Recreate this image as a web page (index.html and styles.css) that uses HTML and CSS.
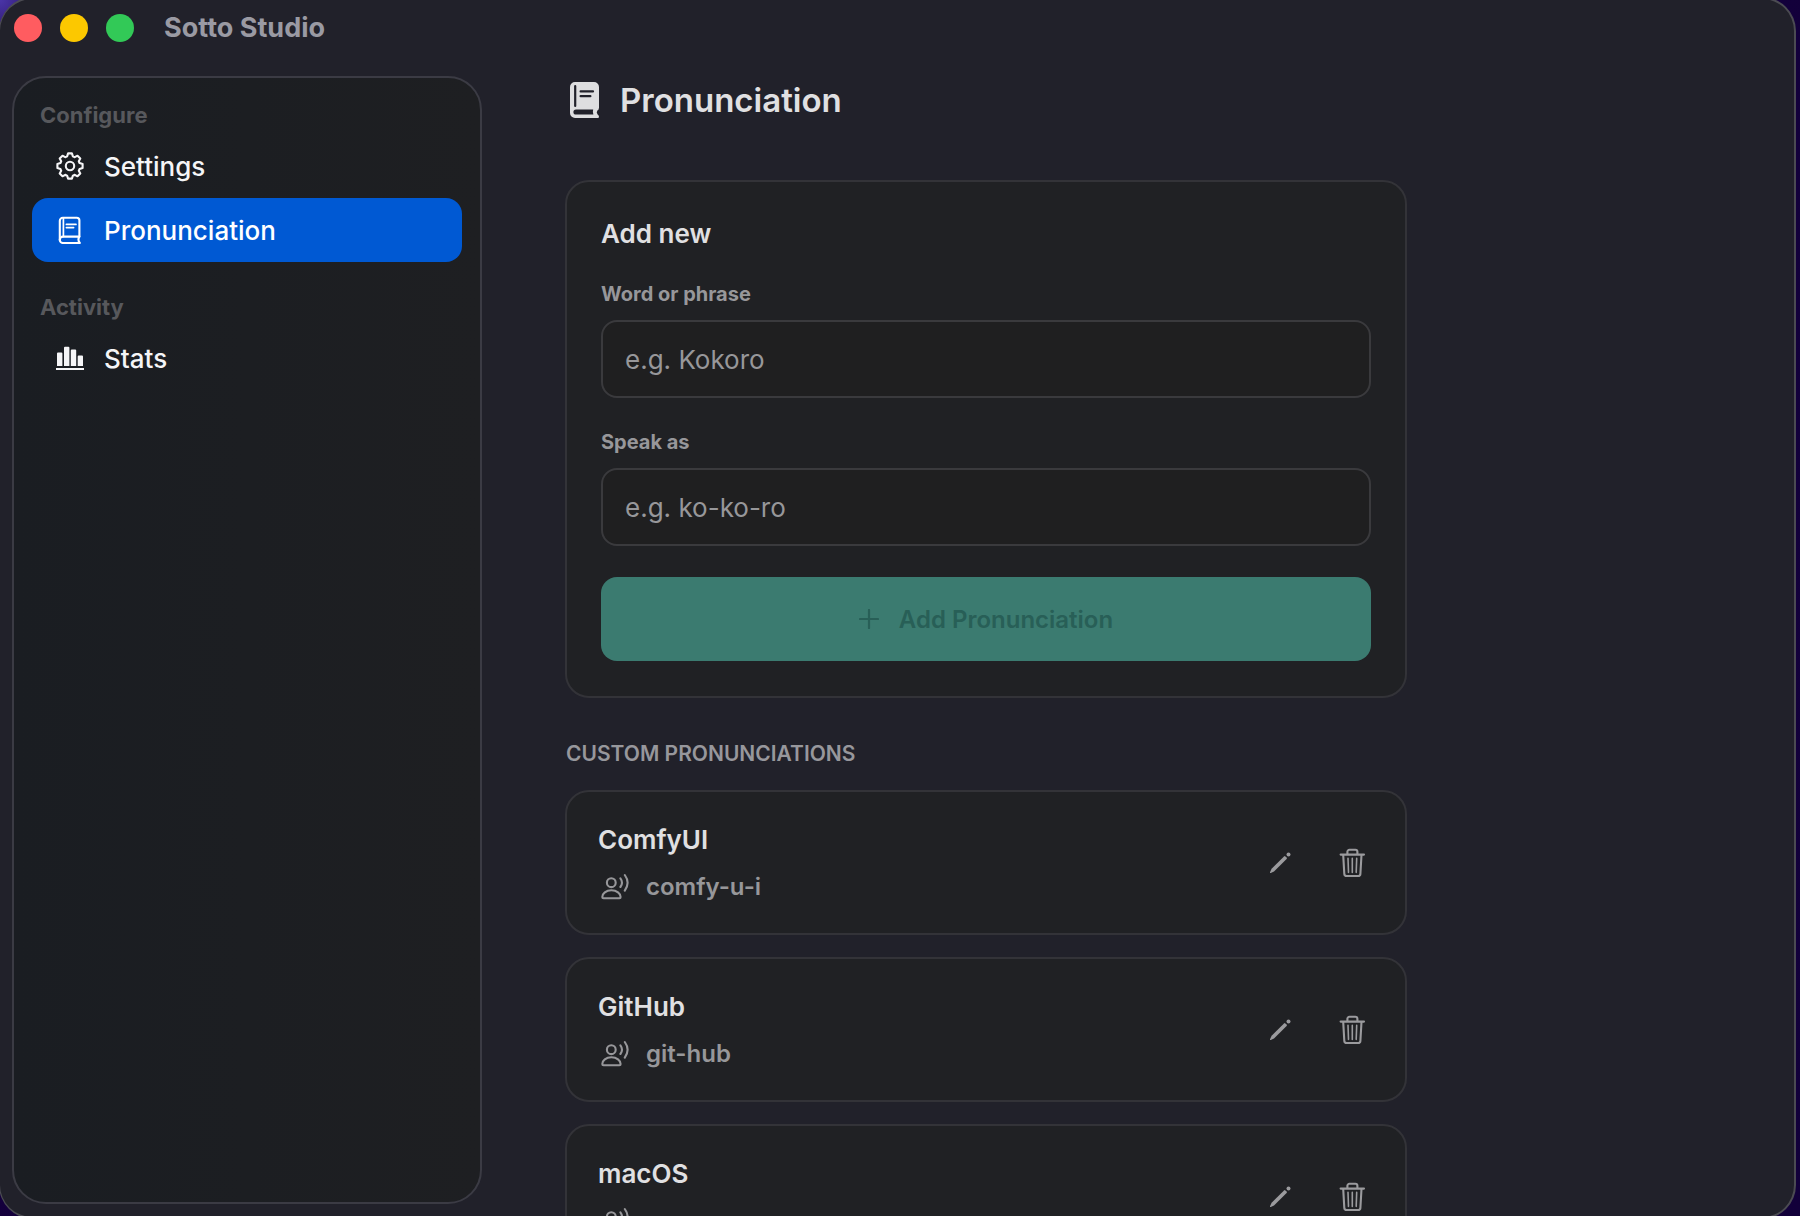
FILE: index.html
```html
<!DOCTYPE html>
<html lang="en">
<head>
<meta charset="utf-8">
<title>Sotto Studio</title>
<link rel="stylesheet" href="styles.css">
</head>
<body>
<svg class="sprite" aria-hidden="true">
  <symbol id="gear" viewBox="-14 -14 28 28">
    <path d="M-2.9-9.6L-1.9-12.6H1.9L2.9-9.6Q3.9-9.2 4.8-8.8L7.5-10.3L10.3-7.5L8.8-4.8Q9.2-3.9 9.6-2.9L12.6-1.9V1.9L9.6 2.9Q9.2 3.9 8.8 4.8L10.3 7.5L7.5 10.3L4.8 8.8Q3.9 9.2 2.9 9.6L1.9 12.6H-1.9L-2.9 9.6Q-3.9 9.2-4.8 8.8L-7.5 10.3L-10.3 7.5L-8.8 4.8Q-9.2 3.9-9.6 2.9L-12.6 1.9V-1.9L-9.6-2.9Q-9.2-3.9-8.8-4.8L-10.3-7.5L-7.5-10.3L-4.8-8.8Q-3.9-9.2-2.9-9.6Z"/>
    <circle r="4.2"/>
  </symbol>
  <symbol id="book" viewBox="0 0 28 28">
    <path d="M23.4 20.4V4.5A2.7 2.7 0 0 0 20.7 1.8H6.8A3 3 0 0 0 3.8 4.8V24"/>
    <path d="M3.8 24A3.2 3.2 0 0 1 7 20.6H23.4C22.2 22.4 22.4 25.2 23.8 27H6.8A3 3 0 0 1 3.8 24"/>
    <path d="M7.4 2V20.4M10.4 8.4H20M10.4 11.6H17.6" stroke-width="1.7"/>
  </symbol>
  <symbol id="bars" viewBox="0 0 28 28">
    <path d="M1 9.4a1 1 0 0 1 1-1h3.4a1 1 0 0 1 1 1V22H1zM8 3.8a1 1 0 0 1 1-1h3.4a1 1 0 0 1 1 1V22H8zM14.8 6.4a1 1 0 0 1 1-1h3.4a1 1 0 0 1 1 1V22h-5.4zM21.7 12.4a1 1 0 0 1 1-1H26a1 1 0 0 1 1 1V22h-5.3zM0 24h28v2H0z"/>
  </symbol>
  <symbol id="speaker" viewBox="0 0 30 28">
    <circle cx="11.3" cy="9.7" r="4.4"/>
    <path d="M2.3 24C2.3 20.4 6 17.3 11.4 17.3S20.6 20.4 20.6 24Q20.6 25.2 19.4 25.2H3.5Q2.3 25.2 2.3 24Z"/>
    <path d="M20.4 5.4Q23.6 9.7 20.4 14M24.8 2Q30.4 9.7 24.8 17.6"/>
  </symbol>
  <symbol id="pencil" viewBox="0 0 28 30">
    <path d="M4 24.2L5.6 20.8L18 8.4A1 1 0 0 1 19.4 8.4L20.6 9.6A1 1 0 0 1 20.6 11L8 23.4L4.8 25Q3.8 25.2 4 24.2Z"/>
    <circle cx="22.5" cy="6.5" r="2"/>
  </symbol>
  <symbol id="trash" viewBox="0 0 28 30">
    <path d="M2.6 6.6H26M9.4 6.4V3.8A2 2 0 0 1 11.4 1.8H17.4A2 2 0 0 1 19.4 3.8V6.4M5.2 6.8L6.3 25.8A2.4 2.4 0 0 0 8.7 28H20A2.4 2.4 0 0 0 22.4 25.8L23.5 6.8"/>
    <path d="M10 10.4L10.5 24.4M14.3 10.4V24.4M18.7 10.4L18.2 24.4" stroke-width="1.6"/>
  </symbol>
</svg>

<div class="window">
  <header class="titlebar">
    <div class="lights">
      <button class="light close" aria-label="Close"></button>
      <button class="light minimize" aria-label="Minimize"></button>
      <button class="light zoom" aria-label="Zoom"></button>
    </div>
    <span class="app-name">Sotto Studio</span>
  </header>

  <nav class="sidebar">
    <h2 class="group">Configure</h2>
    <a class="item" href="#settings"><svg class="icon line"><use href="#gear"/></svg>Settings</a>
    <a class="item active" href="#pronunciation" aria-current="page"><svg class="icon line"><use href="#book"/></svg>Pronunciation</a>
    <h2 class="group">Activity</h2>
    <a class="item" href="#stats"><svg class="icon solid"><use href="#bars"/></svg>Stats</a>
  </nav>

  <main class="content">
    <h1 class="page-title">
      <svg class="title-icon" viewBox="0 0 30 36" aria-hidden="true">
        <path class="cover" d="M5 0H24A5 5 0 0 1 29 5V25.5Q29 27.8 27.4 28.6Q26 30.5 27.6 32.4Q29 33.2 29 34.8Q29 36 27.8 36H5A5 5 0 0 1 0 31V5A5 5 0 0 1 5 0Z"/>
        <path class="cut" d="M5.2 4V24M10.6 9.4H23M10.6 14.2H20.4"/>
        <path class="gap" d="M6 27.4H23.2Q22.4 30 23.4 32.6H6A2.6 2.6 0 0 1 6 27.4Z"/>
      </svg>
      Pronunciation
    </h1>

    <form class="card add-form">
      <h2 class="form-title">Add new</h2>
      <label class="label" for="word">Word or phrase</label>
      <input class="input" id="word" type="text" placeholder="e.g. Kokoro">
      <label class="label" for="speak">Speak as</label>
      <input class="input" id="speak" type="text" placeholder="e.g. ko-ko-ro">
      <button class="submit" type="submit" disabled>
        <svg class="plus" viewBox="0 0 20 20" aria-hidden="true"><path d="M10 1V19M1 10H19"/></svg>
        Add Pronunciation
      </button>
    </form>

    <h2 class="section">CUSTOM PRONUNCIATIONS</h2>
    <ul class="list">
      <li class="card entry">
        <div class="words">
          <span class="word">ComfyUI</span>
          <span class="spoken"><svg class="speaker line"><use href="#speaker"/></svg>comfy-u-i</span>
        </div>
        <button class="action" aria-label="Edit ComfyUI"><svg class="glyph solid"><use href="#pencil"/></svg></button>
        <button class="action" aria-label="Delete ComfyUI"><svg class="glyph line"><use href="#trash"/></svg></button>
      </li>
      <li class="card entry">
        <div class="words">
          <span class="word">GitHub</span>
          <span class="spoken"><svg class="speaker line"><use href="#speaker"/></svg>git-hub</span>
        </div>
        <button class="action" aria-label="Edit GitHub"><svg class="glyph solid"><use href="#pencil"/></svg></button>
        <button class="action" aria-label="Delete GitHub"><svg class="glyph line"><use href="#trash"/></svg></button>
      </li>
      <li class="card entry">
        <div class="words">
          <span class="word">macOS</span>
          <span class="spoken"><svg class="speaker line"><use href="#speaker"/></svg></span>
        </div>
        <button class="action" aria-label="Edit macOS"><svg class="glyph solid"><use href="#pencil"/></svg></button>
        <button class="action" aria-label="Delete macOS"><svg class="glyph line"><use href="#trash"/></svg></button>
      </li>
    </ul>
  </main>
</div>
</body>
</html>
```
FILE: styles.css
```css
* { box-sizing: border-box; }

body {
  margin: 0;
  height: 100vh;
  overflow: hidden;
  background: radial-gradient(circle at 0 0, #4a35a8 0, #17003f 60px, #12003a 100%);
  color: #e0e0e2;
  font-family: Inter, "Liberation Sans", sans-serif;
}

h1, h2, ul { margin: 0; padding: 0; }

.sprite { position: absolute; width: 0; height: 0; }

.line { fill: none; stroke: currentColor; stroke-width: 2.1; stroke-linejoin: round; stroke-linecap: round; }
.solid { fill: currentColor; stroke: none; }

.window {
  display: grid;
  grid-template: 58px minmax(0, 1fr) / 470px minmax(0, 1fr);
  column-gap: 83px;
  height: calc(100vh + 6px);
  margin: -3px 4px -3px -1px;
  padding: 0 0 13px 12px;
  border: 2px solid #4b4b52;
  border-left-width: 1px;
  border-radius: 34px;
  background: #21212a;
  overflow: hidden;
}

.titlebar {
  grid-area: 1 / 1;
  display: flex;
  align-items: center;
  gap: 30px;
  padding-left: 2px;
}
.lights { display: flex; gap: 18px; }
.light { width: 28px; height: 28px; padding: 0; border: 0; border-radius: 50%; }
.close { background: #ff5c60; }
.minimize { background: #fcc800; }
.zoom { background: #32c957; }
.app-name { font-size: 27px; line-height: 32px; font-weight: 700; color: #9a9aa3; }

.sidebar {
  grid-area: 2 / 1;
  margin-top: 19px;
  padding: 20px 18px;
  border: 2px solid #3b3b44;
  border-radius: 34px;
  background: linear-gradient(90deg, #1a1d22, #1e1f22);
}
.group {
  padding: 2px 8px 4px;
  font-size: 22px;
  line-height: 30px;
  font-weight: 700;
  color: #57585c;
}
.item + .group { margin-top: 28px; }
.item {
  display: flex;
  align-items: center;
  gap: 20px;
  height: 64px;
  padding: 0 24px;
  border-radius: 16px;
  font-size: 26px;
  font-weight: 500;
  color: #f5f5f7;
  text-decoration: none;
}
.item.active { background: #0059d3; color: #fff; }
.icon { width: 28px; height: 28px; }

.content {
  grid-area: 1 / 2 / 3 / 3;
  max-width: 842px;
  padding-top: 79px;
  margin-bottom: -13px;
  overflow: hidden;
}
.page-title {
  display: flex;
  align-items: center;
  gap: 20px;
  height: 44px;
  padding-left: 5px;
  margin-bottom: 58px;
  font-size: 33px;
  font-weight: 600;
}
.title-icon { width: 30px; height: 36px; }
.cover { fill: #dedee0; }
.cut { fill: none; stroke: #21212a; stroke-width: 2.2; stroke-linecap: round; }
.gap { fill: #21212a; }

.card {
  border: 2px solid #333338;
  border-radius: 24px;
  background: #202124;
}
.add-form { display: flex; flex-direction: column; padding: 35px 34px; }
.form-title { margin-bottom: 29px; font-size: 26px; line-height: 34px; font-weight: 600; }
.label { margin-bottom: 12px; font-size: 20px; line-height: 28px; font-weight: 700; color: #97979a; }
.input {
  height: 78px;
  margin-bottom: 30px;
  padding: 0 22px;
  border: 2px solid #3a3a3d;
  border-radius: 16px;
  background: #1f1f20;
  color: #e0e0e2;
  font: 400 26px Inter, "Liberation Sans", sans-serif;
}
.input::placeholder { color: #97979a; opacity: 1; }
.submit {
  display: flex;
  align-items: center;
  justify-content: center;
  gap: 20px;
  height: 84px;
  margin-top: 1px;
  border: 0;
  border-radius: 16px;
  background: #3b7b70;
  color: #285f57;
  font: 600 24px Inter, "Liberation Sans", sans-serif;
}
.plus { width: 20px; height: 20px; fill: none; stroke: currentColor; stroke-width: 2.2; stroke-linecap: round; }

.section { margin: 42px 0 22px; padding-left: 1px; font-size: 21px; line-height: 28px; font-weight: 600; color: #97979c; }

.list { display: flex; flex-direction: column; gap: 22px; list-style: none; }
.entry { display: flex; align-items: center; gap: 44px; height: 145px; padding: 0 39px 0 31px; }
.words { flex: 1; display: flex; flex-direction: column; gap: 14px; }
.word { font-size: 26px; line-height: 34px; font-weight: 600; }
.spoken { display: flex; align-items: center; gap: 16px; height: 32px; padding-left: 2px; font-size: 24px; line-height: 32px; font-weight: 600; color: #97979a; }
.speaker { width: 30px; height: 28px; }
.action { width: 28px; height: 30px; padding: 0; border: 0; background: none; color: #9b9b9e; }
.glyph { display: block; width: 28px; height: 30px; }
```
